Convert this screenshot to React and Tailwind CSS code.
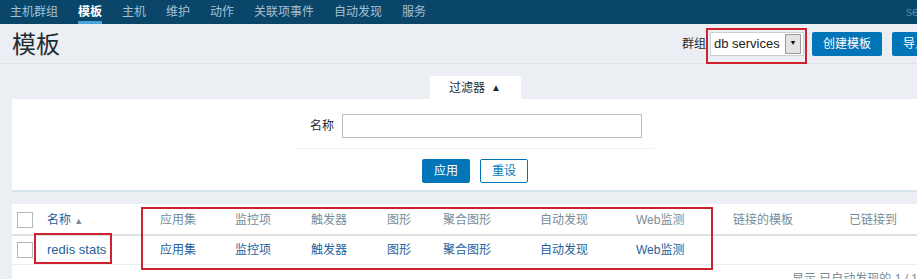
import React from "react";

const navItems = ["主机群组", "模板", "主机", "维护", "动作", "关联项事件", "自动发现", "服务"];

const columns = ["应用集", "监控项", "触发器", "图形", "聚合图形", "自动发现", "Web监测", "链接的模板", "已链接到"];
const rowLinks = ["应用集", "监控项", "触发器", "图形", "聚合图形", "自动发现", "Web监测"];

const gridCols = "grid grid-cols-[35px_113px_75px_76px_76px_56px_97px_96px_97px_116px_1fr] items-center";

function Checkbox() {
  return <span className="block w-4 h-4 bg-white border border-[#acbbc2]" />;
}

export default function App() {
  return (
    <div
      className="relative w-[917px] h-[279px] overflow-hidden bg-[#ebeef2] text-[12px] text-[#1f2c33]"
      style={{ fontFamily: '"Liberation Sans", "Noto Sans CJK SC", sans-serif' }}
    >
      <div className="w-[950px]">
        {/* top navigation */}
        <div className="h-6 bg-[#0a466a] flex items-center pl-[10px] gap-5 relative">
          {navItems.map((item) => (
            <span
              key={item}
              className={
                item === "模板"
                  ? "relative text-white h-6 leading-6 font-semibold"
                  : "text-[#a7c0d2] h-6 leading-6"
              }
            >
              {item}
              {item === "模板" && <span className="absolute left-0 right-0 bottom-0 h-[3px] bg-[#4aa3d8]" />}
            </span>
          ))}
          <span className="absolute left-[906px] top-0 h-6 leading-6 text-[#5f87a3]">se</span>
        </div>

        {/* header */}
        <div className="h-10 flex items-center justify-between pl-3 pr-3 border-b border-[#dde3e7]">
          <h1 className="text-[24px] leading-none text-[#1f2c33] pt-[2px]">模板</h1>
          <div className="flex items-center">
            <span className="mr-[4px]">群组</span>
            <div className="w-[94px] h-[24px] bg-white border border-[#c9d1d6] flex items-center justify-between pl-[3px] pr-[2px] mr-[8px]">
              <span className="text-[13px] text-[#222]">db services</span>
              <span className="w-[16px] h-[20px] bg-[#e3e3e3] border border-[#9a9a9a] flex items-center justify-center text-[7px] text-black">▼</span>
            </div>
            <button className="h-6 px-[11px] bg-[#0275b8] text-white rounded-[2px] mr-[10px]">创建模板</button>
            <button className="h-6 px-[11px] bg-[#0275b8] text-white rounded-[2px]">导入</button>
          </div>
        </div>

        {/* filter */}
        <div className="px-3 pt-3">
          <div className="flex justify-center">
            <div className="w-[91px] h-[23px] bg-white rounded-t-[2px] flex items-center justify-center gap-[6px] text-[#1f2c33]">
              <span>过滤器</span>
              <span className="text-[10px] text-[#1f2c33]">▲</span>
            </div>
          </div>
          <div className="bg-white h-[93px] border-b-2 border-[#d4e6ec] flex flex-col items-center pt-[15px]">
            <div className="flex items-center gap-2 pb-[10px] px-[12px] border-b border-[#f0f2f3] -mr-[1px]">
              <span className="w-[25px] text-right">名称</span>
              <div className="w-[300px] h-[24px] border border-[#b5c1c7] bg-white" />
            </div>
            <div className="flex gap-[10px] mt-[10px]">
              <button className="w-12 h-6 bg-[#0275b8] text-white rounded-[2px]">应用</button>
              <button className="w-12 h-6 bg-white border border-[#0275b8] text-[#0275b8] rounded-[2px]">重设</button>
            </div>
          </div>
        </div>

        {/* table */}
        <div className="px-3 pt-[12px]">
          <div className="bg-white">
            <div className={`${gridCols} h-[32px] pt-[2px] border-b-2 border-[#dbe1e4] text-[#768d99]`}>
              <div className="pl-[5px]"><Checkbox /></div>
              <div className="text-[#1f5f98]">
                名称 <span className="text-[9px] text-[#768d99]">▲</span>
              </div>
              {columns.map((c) => (
                <div key={c}>{c}</div>
              ))}
            </div>
            <div className={`${gridCols} h-[29px] border-b border-[#ebeef0]`}>
              <div className="pl-[5px]"><Checkbox /></div>
              <div className="text-[#1f5f98] text-[13px]">redis stats</div>
              {rowLinks.map((c) => (
                <div key={c} className="text-[#1f5f98]">{c}</div>
              ))}
              <div />
              <div />
            </div>
            <div className="h-4 pl-[780px] pt-[8px] text-[#768d99] leading-none">显示 已自动发现的 1 / 1</div>
          </div>
        </div>
      </div>

      {/* annotation boxes */}
      <div className="absolute left-[706px] top-[28px] w-[101px] h-[36px] border-2 border-[#d0212f]" />
      <div className="absolute left-[34px] top-[233px] w-[78px] h-[31px] border-2 border-[#d0212f]" />
      <div className="absolute left-[141px] top-[207px] w-[572px] h-[63px] border-2 border-[#d0212f]" />
    </div>
  );
}
